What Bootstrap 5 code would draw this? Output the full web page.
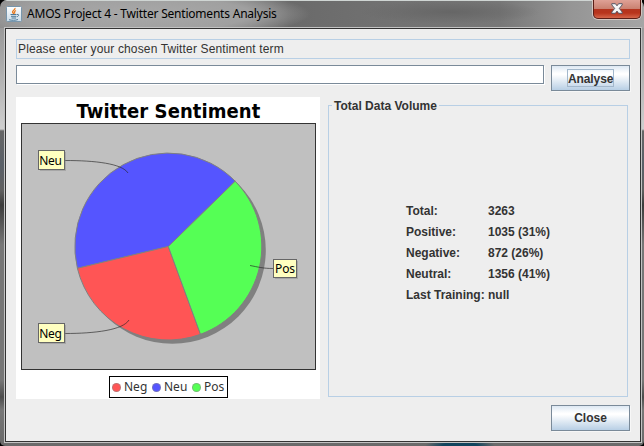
<!DOCTYPE html>
<html lang="en">
<head>
<meta charset="utf-8">
<meta name="viewport" content="width=device-width, initial-scale=1">
<title>AMOS Project 4 - Twitter Sentioments Analysis</title>
<link href="https://cdn.jsdelivr.net/npm/bootstrap@5.3.0/dist/css/bootstrap.min.css" rel="stylesheet">
<style>
html,body{height:100%;overflow:hidden}
body{font:12px/15px "Liberation Sans",Arial,sans-serif;color:#333;background:#000}
.win{height:446px;width:644px;padding:0 3px 4px 5px;border-radius:7px 7px 5px 5px;
 background:
 linear-gradient(#cfd5d3,#cfd5d3) 0 0/100% 1px no-repeat,
 radial-gradient(ellipse 35px 8px at 460px 446px,#12455e 0,#12455e 50%,#12455e00 100%),
 radial-gradient(ellipse 170px 26px at 140px 14px,#a8a8a8 0,#a0a0a0 65%,#a2a2a200 100%) 0 0/100% 28px no-repeat,
 radial-gradient(ellipse 90px 12px at 450px 12px,#666 0,#66666600 100%) 0 0/100% 28px no-repeat,
 linear-gradient(90deg,#8d8d8d 0,#999 40px,#888 220px,#6a6a6a 290px,#727272 400px,#777 500px,#959595 570px,#a5a5a5 100%) 0 0/100% 28px no-repeat,
 linear-gradient(#8d8d8d 0,#a8a8a8 60px,#cfcfcf 129px,#666 131px,#5a6068 165px,#606060 190px,#3c3c3c 205px,#777 245px,#777 380px,#4c4c4c 397px,#777 410px,#6a6a6a 100%)}
.bar{height:28px;padding:0 0 1px 1px}
.appicon{margin-top:6px}
.cap{font:12px/15px "Noto Sans","Open Sans",sans-serif;color:#000;letter-spacing:-.21px;white-space:nowrap;padding:6px 0 0 1px}
.xbtn{width:48px;height:19px;border:1px solid #5b1e17;border-top:0;border-radius:0 0 5px 5px;
 box-shadow:0 0 0 1px #d3c5c0;background:linear-gradient(#dfa196 0,#c98070 9px,#b3341f 9px,#b8341c 13px,#d5654a 100%)}
.xbtn svg{margin-top:3px}
.client{height:414px;background:#eee;border:1px solid #333;box-shadow:0 0 0 1px #c3c3c3;padding:10px}
.hint{height:20px;border:1px solid #b8cfe5;padding:2px 1px 0;letter-spacing:.14px;white-space:nowrap}
.gap6{margin-top:6px}
.term{width:528px;height:19px;padding:0;border:1px solid #7a8a99;border-radius:0;background:#fff;box-shadow:1px 1px 0 #fff;outline:0}
.jbtn{width:79px;height:26px;padding:1px 0 0;border:1px solid #7a8a99;border-radius:0;color:#333;font:bold 12px/15px "Liberation Sans",Arial,sans-serif;
 background:linear-gradient(#dde8f3 0,#fff 30%,#fff 36%,#b8cfe5 100%);box-shadow:1px 1px 0 #fff8}
.foc{display:block;width:47px;border:1px solid #a3b8cc;height:18px;line-height:18px;margin:-1px 0 0 15px;letter-spacing:-.1px}
.chart{width:304px;height:302px;background:#fff}
.ctitle{font:bold 20px/26px "DejaVu Sans Condensed","DejaVu Sans",sans-serif;font-stretch:condensed;color:#000;height:26px;white-space:nowrap;letter-spacing:.08px;padding:1px 0 0 1px}
.plot{display:block;margin-left:5px}
.plot text{font:12px "Noto Sans","Open Sans",sans-serif}
.leg{height:22px;width:119px;border:1px solid #000;margin:6px 0 0 93px;padding-left:2px;font:12px/20px "Noto Sans","Open Sans",sans-serif}
.leg span{width:28px;flex:none}
.leg span:last-child{width:auto}
.dot{flex:none;width:9px;height:9px;border-radius:50%;border:1px solid #8888;margin-right:3px}
.c-neg{background:#f55}.c-neu{background:#55f}.c-pos{background:#5f5}
.vol{width:300px;height:292px;margin:8px 2px 0 0;border:1px solid #b8cfe5;font-weight:bold}
.vtitle{background:#eee;padding:0 2px;margin:-7px 0 0 3px;height:15px;white-space:nowrap}
.nums{display:grid;grid-template-columns:82px auto;row-gap:6px;margin:90px 0 0 77px;white-space:nowrap}
</style>
</head>
<body>
<div class="win">
 <header class="bar d-flex align-items-start">
  <svg width="16" height="16" viewBox="0 0 16 16" class="appicon flex-shrink-0">
   <defs><linearGradient id="ib" x2="0" y2="1"><stop stop-color="#fff"/><stop offset="1" stop-color="#c9dbe8"/></linearGradient></defs>
   <rect x=".5" y=".5" width="15" height="15" rx="1" fill="url(#ib)" stroke="#7896ac"/>
   <path d="M9 2c.6 2-3.200 2.600-2.400 4.300.3.800 1 1.100 1.200 1.700M10 4.500c-2 1-1.800 1.800-1 3" fill="none" stroke="#e8791c" stroke-width="1.300"/>
   <path d="M4.500 8.500h6M5 10.300h5.300M5.500 12h4.500M3 13.700c2.500.8 6.500.8 9-.2M11 8.500c2.200-.6 2.300 1.500-.2 2.300" fill="none" stroke="#4d7896" stroke-width="1"/>
  </svg>
  <div class="cap ms-1">AMOS Project 4 - Twitter Sentioments Analysis</div>
  <button class="xbtn ms-auto p-0 d-flex justify-content-center" aria-label="Close window">
   <svg width="12" height="11" viewBox="0 0 12 11"><path d="M.8.7h3.600L6 2.800 7.600.7h3.600v1.200L8.300 5.400l2.900 3.700v1.200H7.600L6 8.100 4.400 10.300H.8V9.100l2.900-3.700L.8 1.900z" fill="#f6f6f6" stroke="#4a4f60" stroke-width=".9"/></svg>
  </button>
 </header>
 <main class="client">
  <div class="hint">Please enter your chosen Twitter Sentiment term</div>
  <div class="gap6 d-flex justify-content-between align-items-start">
   <input class="term" type="text" aria-label="Term">
   <button class="jbtn"><span class="foc">Analyse</span></button>
  </div>
  <div class="gap6 d-flex justify-content-between align-items-start">
   <section class="chart">
    <div class="ctitle text-center">Twitter Sentiment</div>
    <svg class="plot" width="295" height="247" viewBox="21 123 295 247">
     <rect x="21.500" y="123.500" width="294" height="246" fill="#c0c0c0" stroke="#333"/>
     <circle cx="172.300" cy="250.300" r="93.500" fill="#808080"/>
     <g stroke="#808080" stroke-width="1" stroke-linejoin="round">
      <path d="M168.300 246.500L235.200 181.200A93.500 93.500 0 0 0 77.400 268.300Z" fill="#55f"/>
      <path d="M168.300 246.500L77.400 268.300A93.500 93.500 0 0 0 200.500 334.300Z" fill="#f55"/>
      <path d="M168.300 246.500L200.500 334.300A93.500 93.500 0 0 0 235.200 181.200Z" fill="#5f5"/>
     </g>
     <g fill="none" stroke="#222" stroke-opacity=".8" stroke-width=".8">
      <path d="M65 160.500C95 160.500 122 163.500 128 173"/>
      <path d="M65 333.500C95 333.500 123 330 129 320"/>
      <path d="M273 268.500C263 268.500 258 267 250 265.500"/>
     </g>
     <g fill="#808080" fill-opacity=".4"><rect x="40" y="152" width="26" height="19"/><rect x="40" y="325" width="26" height="19"/><rect x="275" y="261" width="23" height="18"/></g>
     <g fill="#ffffc0" stroke="#666"><rect x="38.500" y="150.500" width="26" height="19"/><rect x="38.500" y="323.500" width="26" height="19"/><rect x="273.500" y="259.500" width="23" height="18"/></g>
     <text x="39.300" y="165" textLength="22.500">Neu</text>
     <text x="39.300" y="338" textLength="22.500">Neg</text>
     <text x="275" y="273" textLength="20">Pos</text>
    </svg>
    <div class="leg d-flex align-items-center">
     <i class="dot c-neg"></i><span>Neg</span>
     <i class="dot c-neu"></i><span>Neu</span>
     <i class="dot c-pos"></i><span>Pos</span>
    </div>
   </section>
   <section class="vol">
    <div class="d-flex"><div class="vtitle">Total Data Volume</div></div>
    <div class="nums">
     <span>Total:</span><span>3263</span>
     <span>Positive:</span><span>1035 (31%)</span>
     <span>Negative:</span><span>872 (26%)</span>
     <span>Neutral:</span><span>1356 (41%)</span>
     <span>Last Training:</span><span>null</span>
    </div>
   </section>
  </div>
  <div class="gap6 d-flex justify-content-end"><button class="jbtn">Close</button></div>
 </main>
</div>
<script src="https://cdn.jsdelivr.net/npm/bootstrap@5.3.0/dist/js/bootstrap.bundle.min.js"></script>
</body>
</html>
